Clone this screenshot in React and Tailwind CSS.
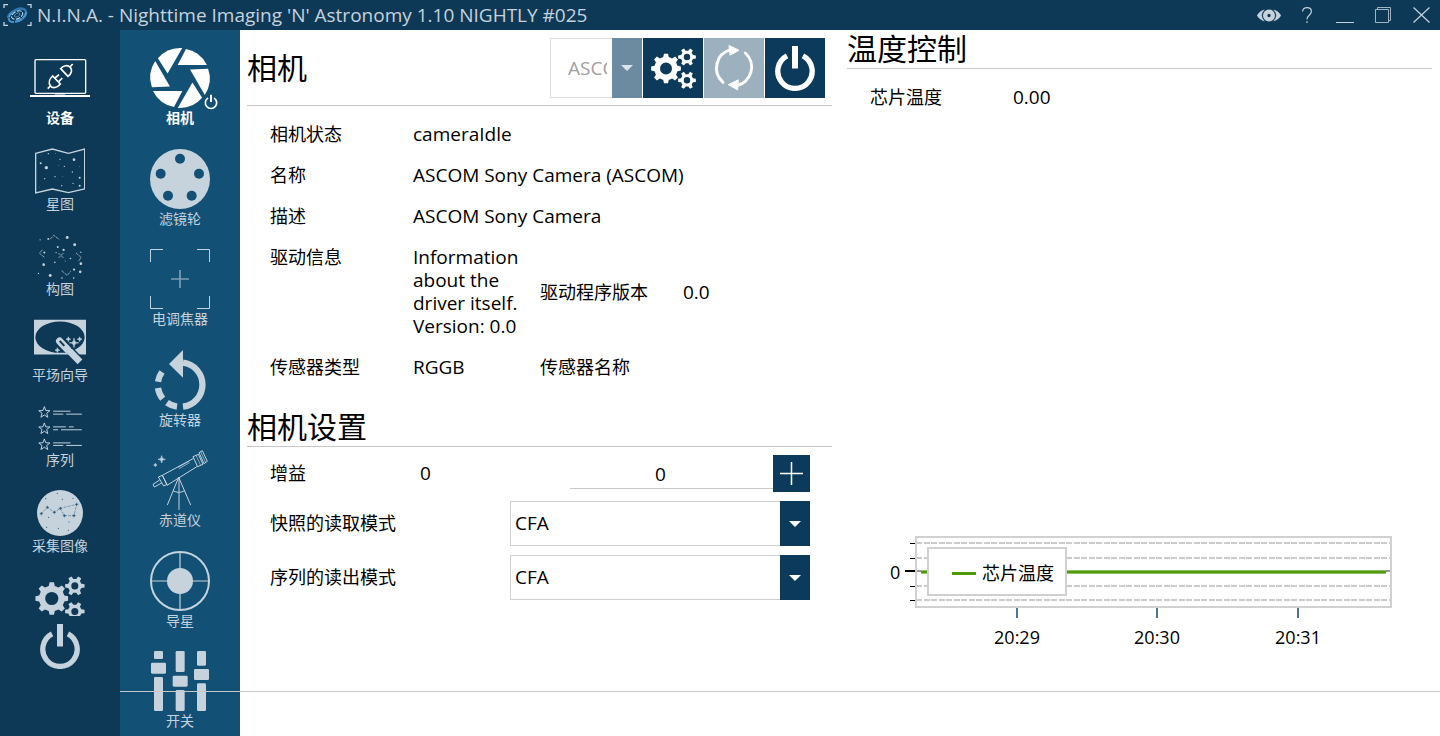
import React, { useState } from 'react';

// outline of a cog wheel: teeth around a body circle, with a round hole
const gearPath = (cx, cy, outer, body, hole, teeth) => {
  const step = (Math.PI * 2) / teeth;
  const point = (radius, angle) =>
    `${(cx + radius * Math.cos(angle)).toFixed(2)} ${(cy + radius * Math.sin(angle)).toFixed(2)}`;
  const pts = [];
  for (let i = 0; i < teeth; i++) {
    const a = i * step;
    pts.push(
      point(body, a - step * 0.3),
      point(outer, a - step * 0.17),
      point(outer, a + step * 0.17),
      point(body, a + step * 0.3)
    );
  }
  return `M${pts.join('L')}Z M${cx - hole} ${cy}a${hole} ${hole} 0 1 0 ${hole * 2} 0a${hole} ${hole} 0 1 0 ${-hole * 2} 0Z`;
};

const starPath = (cx, cy, r) => {
  const pts = [];
  for (let i = 0; i < 10; i++) {
    const a = -Math.PI / 2 + (i * Math.PI) / 5;
    const rad = i % 2 ? r * 0.42 : r;
    pts.push(`${(cx + rad * Math.cos(a)).toFixed(1)} ${(cy + rad * Math.sin(a)).toFixed(1)}`);
  }
  return `M${pts.join('L')}Z`;
};

// four pointed sparkle
const sparkle = (x, y, r) =>
  `M${x} ${y - r}Q${x} ${y} ${x + r} ${y}Q${x} ${y} ${x} ${y + r}Q${x} ${y} ${x - r} ${y}Q${x} ${y} ${x} ${y - r}Z`;

function GearsIcon({ className }) {
  return (
    <svg viewBox="0 0 45 41" className={className} fill="currentColor" fillRule="evenodd">
      <path d={gearPath(15, 20.5, 15, 11.8, 6, 8)} />
      <path d={gearPath(36, 9, 9, 6.3, 3.2, 6)} />
      <path d={gearPath(36, 32.3, 9, 6.3, 3.2, 6)} />
    </svg>
  );
}

function PowerIcon({ className }) {
  return (
    <svg viewBox="0 0 120 136" className={className} fill="none" stroke="currentColor">
      <path d="M36 30A52 52 0 1 0 84 30" strokeWidth="16" />
      <path d="M60 0V68" strokeWidth="18" />
    </svg>
  );
}

function RefreshIcon({ className }) {
  return (
    <svg viewBox="513 60 138 138" className={className} fill="none" stroke="currentColor" strokeWidth="9" strokeLinecap="round">
      <path d="M549 172A57 57 0 0 1 572 74" />
      <path d="M616 84A57 57 0 0 1 590 182" />
      <path d="M568 62L597 76L571 90Z" fill="currentColor" strokeWidth="3" />
      <path d="M594 165L565 179L592 194Z" fill="currentColor" strokeWidth="3" />
    </svg>
  );
}

function LaptopIcon() {
  return (
    <svg viewBox="90 174 180 150" className="w-[60px] h-[50px]" fill="none" stroke="currentColor" strokeWidth="4">
      <rect x="105" y="179" width="152" height="101" rx="3" />
      <path d="M90 288H270" strokeWidth="6" />
      <path d="M164 285H196" strokeWidth="3" />
      <g strokeWidth="5">
        <path d="M143 266L151 258M210 201L218 192" />
        <path d="M158 228L181 252C172 264 157 266 151 257C145 249 148 237 158 228Z" />
        <path d="M182 206L204 229C215 221 218 210 211 202C203 194 190 196 182 206Z" />
        <path d="M165 234L177 224M176 245L187 234" />
      </g>
    </svg>
  );
}

function MapIcon() {
  const dots = [
    [145, 461, 2], [122, 490, 3], [139, 503, 5], [167, 461, 1], [180, 478, 2], [222, 479, 4],
    [193, 499, 2], [175, 497, 1], [238, 499, 1], [217, 516, 2], [165, 530, 2], [187, 529, 1],
    [134, 536, 2], [239, 533, 3], [219, 550, 2], [239, 557, 3], [185, 557, 2], [118, 561, 1], [123, 465, 1],
  ];
  return (
    <svg viewBox="105 444 150 138" className="w-[50px] h-[46px]" fill="currentColor">
      <path
        d="M107 460L157 447L205 460L254 447V567L205 578L157 567L107 579Z"
        fill="none"
        stroke="currentColor"
        strokeWidth="4"
      />
      {dots.map(([x, y, r]) => (
        <circle key={`${x}-${y}`} cx={x} cy={y} r={r} />
      ))}
    </svg>
  );
}

function FramingIcon() {
  const dots = [
    [35, 42, 2], [60, 39, 3], [118, 35, 4.5], [141, 57, 4.5], [89, 64, 3], [107, 73, 3.5], [48, 81, 3],
    [46, 118, 4], [80, 111, 2.5], [128, 99, 2.5], [112, 107, 1.5], [160, 115, 4], [139, 133, 3.5],
    [158, 140, 4], [66, 151, 4.5], [30, 145, 2], [102, 159, 2.5], [138, 159, 2.5], [84, 81, 2], [160, 80, 2],
  ];
  return (
    <svg viewBox="27 24 138 138" className="w-[46px] h-[45px]" fill="currentColor">
      {dots.map(([x, y, r]) => (
        <circle key={`${x}-${y}`} cx={x} cy={y} r={r} />
      ))}
      <path
        d="M66 40L77 28L94 41M42 72L33 83L49 96M145 82L161 96L152 108M101 136L118 151L129 138M91 82L107 98M107 82L91 98"
        fill="none"
        stroke="currentColor"
        strokeWidth="3"
        strokeDasharray="10 2"
        opacity="0.7"
      />
    </svg>
  );
}

function FlatsIcon() {
  return (
    <svg viewBox="102 297 156 135" className="w-[52px] h-[46px]" fill="currentColor">
      <path
        fillRule="evenodd"
        d="M102 298H258V402H102ZM106 350A74 47 0 0 0 254 350A74 47 0 0 0 106 350Z"
      />
      <path d="M174 352L244 425" stroke="#0d3956" strokeWidth="24" />
      <path d="M179 362L202 386" stroke="currentColor" strokeWidth="22" strokeLinecap="round" />
      <path d="M208 391L240 424" stroke="currentColor" strokeWidth="20" />
      <path d="M179 361L193 376" stroke="#0d3956" strokeWidth="6" />
      <path d={sparkle(222, 367, 14)} stroke="currentColor" strokeWidth="2" />
      <path d={sparkle(205, 356, 7)} stroke="currentColor" strokeWidth="2" />
      <path d={sparkle(239, 356, 7)} stroke="currentColor" strokeWidth="2" />
      <path d={sparkle(172, 389, 7)} stroke="currentColor" strokeWidth="2" />
    </svg>
  );
}

function SequenceIcon() {
  return (
    <svg viewBox="111 552 138 138" className="w-[46px] h-[45px]" fill="none" stroke="currentColor" strokeWidth="3">
      <path d={starPath(132, 575, 18)} />
      <path d={starPath(132, 625, 18)} />
      <path d={starPath(132, 674, 18)} />
      <path d="M159 571H212M159 580H190M199 580H247" />
      <path d="M159 619H198M207 619H222M159 628H174M183 628H247" />
      <path d="M159 676H190M199 676H247" />
      <path d="M159 668H212" strokeWidth="5" opacity="0.6" />
    </svg>
  );
}

function ImagingIcon() {
  const stars = [[124, 131], [142, 112], [163, 127], [181, 115], [230, 103], [222, 137], [193, 137]];
  const dots = [[137, 86], [172, 70], [187, 88], [219, 85], [146, 142], [140, 172], [175, 175], [205, 181], [207, 156]];
  return (
    <svg viewBox="111 60 138 138" className="w-[46px] h-[46px]">
      <circle cx="180" cy="129" r="69" fill="currentColor" />
      <path
        d="M124 131L142 112L163 127L181 115L230 103L222 137H193L181 115"
        fill="none"
        stroke="#5a7d98"
        strokeWidth="2"
        strokeDasharray="9 3"
      />
      {stars.map(([x, y]) => (
        <path key={`${x}-${y}`} d={sparkle(x, y, 5)} fill="#2c5878" stroke="#2c5878" />
      ))}
      {dots.map(([x, y]) => (
        <circle key={`${x}-${y}`} cx={x} cy={y} r="1.8" fill="#2c5878" />
      ))}
    </svg>
  );
}

function CameraIcon() {
  return (
    <svg viewBox="0 0 180 180" className="w-[60px] h-[60px] overflow-visible" fill="currentColor">
      {[0, 60, 120, 180, 240, 300].map((deg) => (
        <path key={deg} d="M108 3A89 89 0 0 1 171 51H83Z" transform={`rotate(${deg} 90 90)`} />
      ))}
      <path d="M174 150A17 17 0 1 0 192 150" fill="none" stroke="currentColor" strokeWidth="5" />
      <path d="M183 140V162" stroke="currentColor" strokeWidth="6" />
    </svg>
  );
}

function FilterWheelIcon() {
  return (
    <svg viewBox="0 0 180 180" className="w-[60px] h-[60px]">
      <circle cx="90" cy="90" r="90" fill="currentColor" />
      {[[90, 29], [147, 74], [125, 140], [54, 140], [32, 74]].map(([x, y]) => (
        <circle key={x} cx={x} cy={y} r="15" fill="#125076" />
      ))}
    </svg>
  );
}

function FocuserIcon() {
  return (
    <svg viewBox="0 0 180 180" className="w-[60px] h-[60px]" fill="none" stroke="currentColor" strokeWidth="3">
      <path d="M39 1.5H1.5V39M141 1.5H178.5V39M39 178.5H1.5V141M141 178.5H178.5V141" />
      <path d="M90 63V117M63 90H117" strokeWidth="5" opacity="0.6" />
    </svg>
  );
}

function RotatorIcon() {
  return (
    <svg viewBox="0 0 180 180" className="w-[60px] h-[60px]" fill="none" stroke="currentColor" strokeWidth="19">
      <path d="M99 38A66.5 66.5 0 0 1 99 170" />
      <path d="M57 42L99 0V83Z" fill="currentColor" stroke="none" />
      <path d="M81 170A66.5 66.5 0 0 1 51 158M38 146A66.5 66.5 0 0 1 24 114M24 95A66.5 66.5 0 0 1 36 66" />
    </svg>
  );
}

function TelescopeIcon() {
  return (
    <svg viewBox="15 15 180 180" className="w-[60px] h-[60px]" fill="none" stroke="currentColor" strokeWidth="3">
      <path d="M162 23L172 17L187 49L177 56Z" />
      <path d="M144 35L160 28L174 58L158 65Z" />
      <path d="M153 31L167 61M167 20L182 53" strokeWidth="2" />
      <path d="M146 40L52 91L66 121L157 64" />
      <path d="M40 96L52 91L66 118L56 123Z" />
      <path d="M44 105L24 118L28 126L50 114" />
      <path d="M99 67L132 49M102 71L134 53" strokeWidth="2" />
      <path d="M101 97L67 180M101 97L137 180M84 137Q101 147 119 137" />
      <path d="M102 97V195" strokeWidth="5" opacity="0.6" />
      <path d={sparkle(50, 43, 11)} fill="currentColor" strokeWidth="2" />
      <path d={sparkle(31, 60, 5)} fill="currentColor" strokeWidth="2" />
    </svg>
  );
}

function GuiderIcon() {
  return (
    <svg viewBox="0 0 180 180" className="w-[60px] h-[60px]" fill="none" stroke="currentColor">
      <circle cx="90" cy="90" r="87" strokeWidth="6" />
      <circle cx="90" cy="90" r="39" fill="currentColor" stroke="none" />
      <path d="M3 90H177" strokeWidth="3" />
      <path d="M90 3V177" strokeWidth="6" opacity="0.6" />
    </svg>
  );
}

function SwitchIcon() {
  const bars = [
    [12, 0, 27, 24], [12, 78, 27, 102], [77, 0, 27, 63], [77, 117, 27, 63], [141, 0, 27, 44], [141, 97, 27, 83],
    [3, 35, 45, 33], [68, 74, 45, 33], [132, 54, 45, 33],
  ];
  return (
    <svg viewBox="0 0 180 180" className="w-[60px] h-[60px]" fill="currentColor">
      {bars.map(([x, y, w, h]) => (
        <rect key={`${x}-${y}`} x={x} y={y} width={w} height={h} rx="4" />
      ))}
    </svg>
  );
}

function LogoIcon() {
  return (
    <svg viewBox="9 9 87 72" className="w-[29px] h-[24px]" fill="none">
      <path d="M12 24V14H24M82 14H93V24M12 66V76H24M82 76H93V66" stroke="#c6d2dc" strokeWidth="4" />
      <g transform="rotate(-28 52 46)">
        <path d="M24 40C30 26 72 24 80 42C84 58 58 68 38 60" stroke="#2f78b5" strokeWidth="7" />
        <path d="M80 50C70 66 30 66 24 50C22 42 30 34 42 32" stroke="#4a94d0" strokeWidth="6" strokeDasharray="22 3" />
        <ellipse cx="52" cy="45" rx="18" ry="11" stroke="#c6e0f2" strokeWidth="3" strokeDasharray="14 4" />
        <ellipse cx="52" cy="45" rx="9" ry="5" stroke="#6fb0de" strokeWidth="2" />
      </g>
    </svg>
  );
}

const mainTabs = [
  { label: '设备', Icon: LaptopIcon },
  { label: '星图', Icon: MapIcon },
  { label: '构图', Icon: FramingIcon },
  { label: '平场向导', Icon: FlatsIcon },
  { label: '序列', Icon: SequenceIcon },
  { label: '采集图像', Icon: ImagingIcon },
];

const deviceTabs = [
  { label: '相机', Icon: CameraIcon },
  { label: '滤镜轮', Icon: FilterWheelIcon },
  { label: '电调焦器', Icon: FocuserIcon },
  { label: '旋转器', Icon: RotatorIcon },
  { label: '赤道仪', Icon: TelescopeIcon },
  { label: '导星', Icon: GuiderIcon },
  { label: '开关', Icon: SwitchIcon },
];

function Tab({ label, Icon, active, onClick }) {
  return (
    <button
      onClick={onClick}
      className={`flex flex-col items-center w-full ${active ? 'text-white font-bold' : 'text-[#c6d2dc]'}`}
    >
      <Icon />
      <span className="text-[14px] leading-[20px]">{label}</span>
    </button>
  );
}

function TitleBar() {
  return (
    <header className="flex items-center h-[30px] pl-[3px] bg-[#0d3956] text-[#c6d2dc]">
      <LogoIcon />
      <h1 className="ml-[5px] flex-1 text-[19px] leading-[30px]">
        N.I.N.A. - Nighttime Imaging 'N' Astronomy 1.10 NIGHTLY #025
      </h1>
      <button aria-label="Eye" className="w-[38px] h-[30px] flex items-center justify-center">
        <svg viewBox="0 0 72 38" className="w-[24px] h-[13px]" fill="none" stroke="currentColor">
          <path d="M22 2Q8 6 0 19Q8 32 22 36Q6 19 22 2ZM50 2Q64 6 72 19Q64 32 50 36Q66 19 50 2Z" fill="currentColor" strokeWidth="1" />
          <circle cx="36" cy="19" r="11.5" strokeWidth="13" />
        </svg>
      </button>
      <button aria-label="Help" className="w-[38px] h-[30px] flex items-center justify-center">
        <svg viewBox="0 0 10 16" className="w-[10px] h-[16px]" fill="none" stroke="currentColor" strokeWidth="1.2">
          <path d="M0.6 4.5C0.6 -0.7 9.4 -0.7 9.4 4.5C9.4 8 5 8 5 12.5M5 14.2V16" />
        </svg>
      </button>
      <button aria-label="Minimize" className="w-[38px] h-[30px] flex items-center justify-center">
        <svg viewBox="0 0 18 16" className="w-[18px] h-[16px]" fill="none" stroke="currentColor">
          <path d="M0 15.5H18" />
        </svg>
      </button>
      <button aria-label="Restore" className="w-[38px] h-[30px] flex items-center justify-center">
        <svg viewBox="0 0 16 16" className="w-[16px] h-[16px]" fill="none" stroke="currentColor" opacity="0.8">
          <path d="M0.5 2.5H13.5V15.5H0.5ZM2.5 2.5V0.5H15.5V13.5H13.5" />
        </svg>
      </button>
      <button aria-label="Close" className="w-[38px] h-[30px] flex items-center justify-center">
        <svg viewBox="0 0 17 16" className="w-[17px] h-[16px]" fill="none" stroke="currentColor" strokeWidth="1.2">
          <path d="M0.5 0.5L16.5 15.5M16.5 0.5L0.5 15.5" />
        </svg>
      </button>
    </header>
  );
}

function ModeSelect({ id, label }) {
  return (
    <div className="flex items-center h-[45px] mt-[9px]">
      <label htmlFor={id} className="w-[240px] leading-[23px]">{label}</label>
      <div className="relative flex-1">
        <select
          id={id}
          className="appearance-none w-full h-[45px] pl-1 pr-[34px] border border-[#d0d0d0] bg-white text-[19px]"
        >
          <option>CFA</option>
        </select>
        <span className="absolute right-0 top-0 flex items-center justify-center w-[30px] h-full bg-[#0c3a5a] pointer-events-none">
          <svg viewBox="0 0 12 6" className="w-[12px] h-[6px]" fill="white">
            <path d="M0 0H12L6 6Z" />
          </svg>
        </span>
      </div>
    </div>
  );
}

function CameraPanel() {
  const [gain, setGain] = useState(0);

  return (
    <section>
      <div className="flex items-center pt-2 pb-[7px] pr-[7px] border-b border-[#c8c8c8]">
        <h2 className="flex-1 text-[30px] leading-[38px]">相机</h2>
        <div className="flex gap-px">
          <div className="relative w-[92px]">
            <select
              disabled
              aria-label="相机"
              className="appearance-none w-full h-[60px] pl-[17px] pr-[34px] border border-[#dcdcdc] bg-white text-[19px] text-[#a0a0a0]"
            >
              <option>ASCOM Sony Camera</option>
            </select>
            <span className="absolute right-0 top-0 flex items-center justify-center w-[30px] h-full bg-[#6d8ba0] pointer-events-none">
              <svg viewBox="0 0 12 6" className="w-[12px] h-[6px]" fill="#dce4ea">
                <path d="M0 0H12L6 6Z" />
              </svg>
            </span>
          </div>
          <button aria-label="Settings" className="flex items-center justify-center w-[60px] h-[60px] bg-[#0c3a5a] text-white">
            <GearsIcon className="w-[45px] h-[41px]" />
          </button>
          <button aria-label="Refresh" className="flex items-center justify-center w-[60px] h-[60px] bg-[#9db0be] text-white" disabled>
            <RefreshIcon className="w-[46px] h-[46px]" />
          </button>
          <button aria-label="Disconnect" className="flex items-center justify-center w-[60px] h-[60px] bg-[#0c3a5a] text-white">
            <PowerIcon className="w-[40px] h-[45px]" />
          </button>
        </div>
      </div>

      <dl className="grid grid-cols-[143px_112px_143px_1fr] gap-y-[18px] pl-[23px] pt-[17px] text-[18px] leading-[23px]">
        <dt>相机状态</dt>
        <dd className="col-span-3 text-[19px]">cameraIdle</dd>
        <dt>名称</dt>
        <dd className="col-span-3 text-[19px]">ASCOM Sony Camera (ASCOM)</dd>
        <dt>描述</dt>
        <dd className="col-span-3 text-[19px]">ASCOM Sony Camera</dd>
        <dt>驱动信息</dt>
        <dd className="text-[19px]">Information about the driver itself. Version: 0.0</dd>
        <dt className="pl-[15px] self-center">驱动程序版本</dt>
        <dd className="pl-[15px] self-center text-[19px]">0.0</dd>
        <dt>传感器类型</dt>
        <dd className="text-[19px]">RGGB</dd>
        <dt className="pl-[15px]">传感器名称</dt>
        <dd></dd>
      </dl>

      <h2 className="mt-[29px] text-[30px] leading-[38px] border-b border-[#c8c8c8]">相机设置</h2>
      <div className="pl-[23px] pr-[22px] pt-2 text-[18px]">
        <div className="flex h-[37px]">
          <label htmlFor="gain" className="w-[150px] leading-[37px]">增益</label>
          <span className="w-[150px] text-[19px] leading-[37px]">{gain}</span>
          <input
            id="gain"
            value={gain}
            onChange={(e) => setGain(Number(e.target.value) || 0)}
            className="flex-1 min-w-0 h-[34px] pt-1 pr-[22px] border-b border-[#c8c8c8] text-center text-[19px] outline-none"
          />
          <button
            aria-label="Increase gain"
            onClick={() => setGain(gain + 1)}
            className="flex items-center justify-center w-[37px] h-[37px] bg-[#0c3a5a] text-white"
          >
            <svg viewBox="0 0 23 23" className="w-[23px] h-[23px]" stroke="currentColor" strokeWidth="1.5">
              <path d="M11.5 0V23M0 11.5H23" />
            </svg>
          </button>
        </div>
        <ModeSelect id="snap-mode" label="快照的读取模式" />
        <ModeSelect id="seq-mode" label="序列的读出模式" />
      </div>
    </section>
  );
}

function TemperatureChart() {
  const minor = [17, 32, 60, 74];
  const ticks = [
    { x: 170, label: '20:29' },
    { x: 310, label: '20:30' },
    { x: 451, label: '20:31' },
  ];

  return (
    <svg viewBox="0 0 585 130" className="w-full" shapeRendering="crispEdges">
      {minor.map((y) => (
        <g key={y}>
          <path d={`M69 ${y}H544`} stroke="#cbcbcb" strokeWidth="2" strokeDasharray="6 1.5" />
          <path d={`M63 ${y}H69`} stroke="black" />
        </g>
      ))}
      <path d="M69 45H544" stroke="#999999" strokeWidth="2" />
      <path d="M58 45H69" stroke="black" strokeWidth="2" />
      <rect x="69" y="11" width="475" height="70" fill="none" stroke="#d0d0d0" strokeWidth="2" />
      <path d="M74 46H539" stroke="#8fbf66" strokeWidth="4" />
      <path d="M74 46H539" stroke="#4e9a06" strokeWidth="2" />

      <rect x="81" y="22" width="138" height="47" fill="white" stroke="#d0d0d0" strokeWidth="2" />
      <path d="M105 47H129" stroke="#4e9a06" strokeWidth="3" />
      <text x="135" y="54" className="text-[18px]">芯片温度</text>

      <text x="43" y="53" className="text-[18px]">0</text>
      {ticks.map(({ x, label }) => (
        <g key={label}>
          <path d={`M${x} 82V92`} stroke="#4f7390" strokeWidth="2" />
          <text x={x} y="118" textAnchor="middle" className="text-[18px]">{label}</text>
        </g>
      ))}
    </svg>
  );
}

function TemperaturePanel() {
  return (
    <section className="flex flex-col justify-between pb-[36px]">
      <div>
        <h2 className="text-[30px] leading-[38px] border-b border-[#c8c8c8]">温度控制</h2>
        <dl className="grid grid-cols-[143px_1fr] pl-[23px] pt-[17px] text-[18px] leading-[23px]">
          <dt>芯片温度</dt>
          <dd className="text-[19px]">0.00</dd>
        </dl>
      </div>
      <TemperatureChart />
    </section>
  );
}

export default function App() {
  const [tab, setTab] = useState('设备');
  const [device, setDevice] = useState('相机');

  return (
    <div className="flex flex-col min-h-screen bg-white text-black font-['Open_Sans','Noto_Sans_CJK_SC',sans-serif]">
      <TitleBar />
      <div className="flex flex-1">
        <nav className="flex flex-col items-center gap-5 w-[120px] pt-[28px] bg-[#0d3956]">
          {mainTabs.map((t) => (
            <Tab key={t.label} {...t} active={t.label === tab} onClick={() => setTab(t.label)} />
          ))}
          <div className="flex flex-col items-center gap-2 text-[#c6d2dc]">
            <button aria-label="Options" className="h-[40px] overflow-hidden">
              <GearsIcon className="w-[50px] h-[45px]" />
            </button>
            <button aria-label="Exit">
              <PowerIcon className="w-[40px] h-[45px]" />
            </button>
          </div>
        </nav>

        <div className="relative flex flex-1">
          <nav className="flex flex-col justify-between w-[120px] pt-[18px] pb-[5px] bg-[#125076]">
            {deviceTabs.map((t) => (
              <Tab key={t.label} {...t} active={t.label === device} onClick={() => setDevice(t.label)} />
            ))}
          </nav>
          <main className="flex-1 grid grid-cols-2 gap-[15px] pl-[7px] pr-2 pb-[44px]">
            <CameraPanel />
            <TemperaturePanel />
          </main>
          {/* status bar divider runs over the device tabs too */}
          <div className="absolute inset-x-0 bottom-[44px] h-px bg-[#c8c8c8] pointer-events-none" />
        </div>
      </div>
    </div>
  );
}
